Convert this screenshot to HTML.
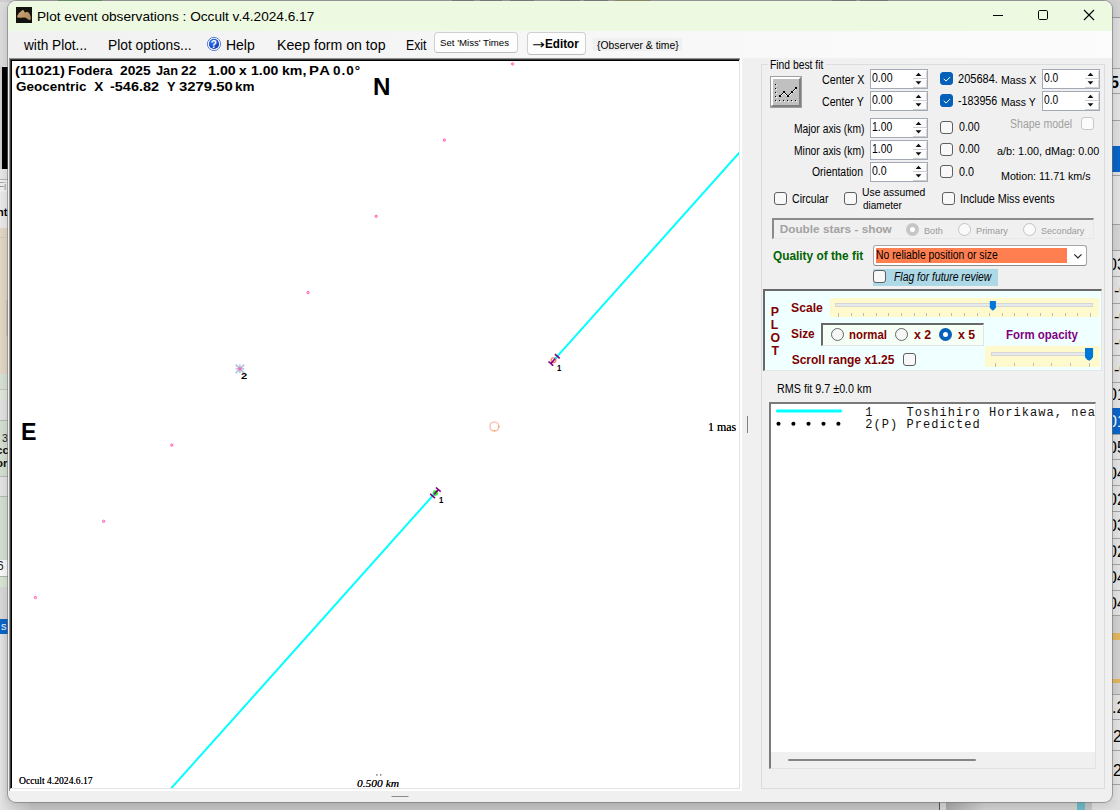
<!DOCTYPE html>
<html lang="en"><head><meta charset="utf-8"><title>Plot event observations : Occult v.4.2024.6.17</title>
<style>
html,body{margin:0;padding:0}
body{width:1120px;height:810px;overflow:hidden;position:relative;background:#c9c9c9;font-family:"Liberation Sans",sans-serif;}
.a{position:absolute;box-sizing:border-box}
.t{position:absolute;white-space:pre;line-height:1;transform-origin:0 50%;}
#win{left:8px;top:1px;width:1104px;height:801px;border-radius:8px;background:#f0f0f0;overflow:hidden;box-shadow:0 0 0 1px rgba(110,110,110,.55),0 2px 10px 2px rgba(0,0,0,.12);}
#titlebar{left:0;top:0;width:1104px;height:30px;background:#eef9e1}
#menubar{left:0;top:30px;width:1104px;height:27px;background:linear-gradient(90deg,#f1f1f1,#fcfcfc)}
.spin{background:#fff;border:1px solid #a3a9b7;height:20px}
.spbtn{background:#fcfcfc;border-right:1px solid #d9d9d9;border-bottom:1px solid #cfcfcf;width:14px}
.cb{width:13px;height:13px;border:1px solid #5f5f5f;border-radius:3px;background:#f8f8f8}
.cb.on{background:#0560b9;border-color:#0560b9}
.cb.dis{border-color:#c8c8c8;background:#fbfbfb}
.rb{width:13px;height:13px;border:1px solid #666;border-radius:50%;background:#f6f6f6}
.rb.dis{border-color:#c4c4c4;background:#fafafa}
.sunk{border-top:2px solid #6f6f6f;border-left:2px solid #6f6f6f;border-right:1px solid #e3e3e3;border-bottom:1px solid #e3e3e3}
.mono{font:12px "Liberation Mono",monospace;letter-spacing:1.045px;color:#111;white-space:pre;line-height:1}

</style></head>
<body>
<!-- desktop / background window fragments -->
<div class="a" style="left:0px;top:0px;width:9px;height:810px;background:#e6e6e6;"></div>
<div class="a" style="left:0px;top:0px;width:9px;height:66px;background:#dcdcdc;"></div>
<div class="a" style="left:0px;top:66px;width:2px;height:104px;background:#d0d0d0;"></div>
<div class="a" style="left:2px;top:67px;width:6px;height:102px;background:#000;"></div>
<div class="a" style="left:0px;top:169px;width:9px;height:10px;background:#e8e8e8;"></div>
<div class="a" style="left:0px;top:179px;width:9px;height:1px;background:#b5b5b5;"></div>
<div class="a" style="left:0px;top:180px;width:9px;height:12px;background:#f2f2f2;"></div>
<div class="a" style="left:0px;top:192px;width:9px;height:36px;background:#ebebeb;"></div>
<div class="a" style="left:0px;top:228px;width:9px;height:146px;background:#e3d7c5;"></div>
<div class="a" style="left:0px;top:237px;width:6px;height:1px;background:#d6cbbb;"></div>
<div class="a" style="left:6px;top:300px;width:2px;height:36px;background:#cfc6b8;"></div>
<div class="a" style="left:0px;top:374px;width:9px;height:15px;background:#d8e2d4;"></div>
<div class="a" style="left:0px;top:389px;width:9px;height:1px;background:#c2c8c0;"></div>
<div class="a" style="left:0px;top:390px;width:9px;height:11px;background:#e0e8dd;"></div>
<div class="a" style="left:0px;top:401px;width:9px;height:19px;background:#e2e2e2;"></div>
<div class="a" style="left:0px;top:420px;width:9px;height:1px;background:#b8b8b8;"></div>
<div class="a" style="left:0px;top:421px;width:9px;height:55px;background:#d5dfd2;"></div>
<div class="a" style="left:0px;top:476px;width:9px;height:1px;background:#b8b8b8;"></div>
<div class="a" style="left:0px;top:477px;width:9px;height:19px;background:#e4e4e4;"></div>
<div class="a" style="left:0px;top:496px;width:9px;height:1px;background:#b8b8b8;"></div>
<div class="a" style="left:0px;top:497px;width:9px;height:63px;background:#d5dfd2;"></div>
<div class="a" style="left:0px;top:560px;width:9px;height:16px;background:#fafafa;"></div>
<div class="a" style="left:0px;top:576px;width:9px;height:1px;background:#b0b0b0;"></div>
<div class="a" style="left:0px;top:577px;width:9px;height:10px;background:#d8e6d4;"></div>
<div class="a" style="left:0px;top:587px;width:9px;height:32px;background:#d8d8d8;"></div>
<div class="a" style="left:0px;top:619px;width:9px;height:15px;background:#0a66c8;"></div>
<div class="a" style="left:0px;top:634px;width:9px;height:176px;background:linear-gradient(90deg,#e6e6e6,#d6d6d6);"></div>
<div class="a" style="left:0;top:0;width:8px;height:810px;overflow:hidden;font-family:'Liberation Sans',sans-serif;white-space:pre"><span class="a" style="left:-2px;top:181px;font-size:10px;color:#999">Fi</span><span class="a" style="left:-3px;top:206px;font:bold 11px 'Liberation Sans',sans-serif;color:#000">nt</span><span class="a" style="left:2px;top:432px;font-size:10.5px;color:#222">3</span><span class="a" style="left:-4px;top:444px;font:bold 11.5px 'Liberation Sans',sans-serif;color:#111">cc</span><span class="a" style="left:-4px;top:457px;font:bold 11.5px 'Liberation Sans',sans-serif;color:#111">or</span><span class="a" style="left:-3px;top:559px;font-size:12px;color:#222">6</span><span class="a" style="left:1px;top:620px;font-size:11px;color:#fff">s</span></div>
<div class="a" style="left:0px;top:0px;width:1120px;height:2px;background:#cfcfcf;"></div>
<div class="a" style="left:58px;top:0px;width:44px;height:1px;background:#58b058;"></div>
<div class="a" style="left:615px;top:0px;width:36px;height:1px;background:#b0ae62;"></div>
<div class="a" style="left:452px;top:0px;width:22px;height:1px;background:#8c8c96;"></div>
<div class="a" style="left:480px;top:0px;width:22px;height:1px;background:#8c8c96;"></div>
<div class="a" style="left:510px;top:0px;width:24px;height:1px;background:#8c8c96;"></div>
<div class="a" style="left:560px;top:0px;width:20px;height:1px;background:#8c8c96;"></div>
<div class="a" style="left:584px;top:0px;width:24px;height:1px;background:#8c8c96;"></div>
<div class="a" style="left:832px;top:0px;width:24px;height:1px;background:#8c8c96;"></div>
<div class="a" style="left:860px;top:0px;width:28px;height:1px;background:#8c8c96;"></div>
<div class="a" style="left:1108px;top:0px;width:12px;height:810px;background:#e4e4e4;"></div>
<div class="a" style="left:1108px;top:0px;width:12px;height:17px;background:#d2d2d2;"></div>
<div class="a" style="left:1108px;top:17px;width:12px;height:1px;background:#9c9c9c;"></div>
<div class="a" style="left:1108px;top:18px;width:12px;height:50px;background:#dedede;"></div>
<div class="a" style="left:1108px;top:68px;width:12px;height:1px;background:#a4a4a4;"></div>
<div class="a" style="left:1108px;top:93px;width:12px;height:1px;background:#a4a4a4;"></div>
<div class="a" style="left:1108px;top:120px;width:12px;height:1px;background:#a4a4a4;"></div>
<div class="a" style="left:1108px;top:175px;width:12px;height:1px;background:#a4a4a4;"></div>
<div class="a" style="left:1108px;top:224px;width:12px;height:1px;background:#a4a4a4;"></div>
<div class="a" style="left:1108px;top:250px;width:12px;height:1px;background:#a4a4a4;"></div>
<div class="a" style="left:1108px;top:276px;width:12px;height:1px;background:#a4a4a4;"></div>
<div class="a" style="left:1108px;top:303px;width:12px;height:1px;background:#a4a4a4;"></div>
<div class="a" style="left:1108px;top:329px;width:12px;height:1px;background:#a4a4a4;"></div>
<div class="a" style="left:1108px;top:355px;width:12px;height:1px;background:#a4a4a4;"></div>
<div class="a" style="left:1108px;top:382px;width:12px;height:1px;background:#a4a4a4;"></div>
<div class="a" style="left:1108px;top:408px;width:12px;height:1px;background:#a4a4a4;"></div>
<div class="a" style="left:1108px;top:434px;width:12px;height:1px;background:#a4a4a4;"></div>
<div class="a" style="left:1108px;top:459px;width:12px;height:1px;background:#a4a4a4;"></div>
<div class="a" style="left:1108px;top:485px;width:12px;height:1px;background:#a4a4a4;"></div>
<div class="a" style="left:1108px;top:511px;width:12px;height:1px;background:#a4a4a4;"></div>
<div class="a" style="left:1108px;top:538px;width:12px;height:1px;background:#a4a4a4;"></div>
<div class="a" style="left:1108px;top:564px;width:12px;height:1px;background:#a4a4a4;"></div>
<div class="a" style="left:1108px;top:590px;width:12px;height:1px;background:#a4a4a4;"></div>
<div class="a" style="left:1108px;top:615px;width:12px;height:1px;background:#a4a4a4;"></div>
<div class="a" style="left:1108px;top:694px;width:12px;height:1px;background:#a4a4a4;"></div>
<div class="a" style="left:1108px;top:719px;width:12px;height:1px;background:#a4a4a4;"></div>
<div class="a" style="left:1108px;top:750px;width:12px;height:1px;background:#a4a4a4;"></div>
<div class="a" style="left:1108px;top:784px;width:12px;height:1px;background:#a4a4a4;"></div>
<div class="a" style="left:1108px;top:121px;width:12px;height:25px;background:#e0e0e0;"></div>
<div class="a" style="left:1108px;top:146px;width:12px;height:26px;background:#0a64c8;"></div>
<div class="a" style="left:1108px;top:225px;width:12px;height:25px;background:#d6d6d6;"></div>
<div class="a" style="left:1108px;top:408px;width:12px;height:26px;background:#0a64c8;"></div>
<div class="a" style="left:1108px;top:616px;width:12px;height:78px;background:#d2d2d2;"></div>
<div class="a" style="left:1108px;top:633px;width:12px;height:7px;background:#e2b85e;"></div>
<div class="a" style="left:1108px;top:679px;width:12px;height:4px;background:#e2b85e;"></div>
<div class="a" style="left:1113px;top:0;width:7px;height:810px;overflow:hidden;white-space:pre;font:16px 'Liberation Sans',sans-serif;line-height:1"><span class="a" style="left:-3px;top:74.5px;color:#000;font-weight:bold;">5</span><span class="a" style="left:-5px;top:256.5px;color:#000;">03</span><span class="a" style="left:1px;top:282.5px;color:#000;">-0</span><span class="a" style="left:1px;top:308.5px;color:#000;">-0</span><span class="a" style="left:1px;top:334.5px;color:#000;">-0</span><span class="a" style="left:1px;top:361.5px;color:#000;">-0</span><span class="a" style="left:-5px;top:386.5px;color:#000;">01</span><span class="a" style="left:-5px;top:413.5px;color:#fff;">01</span><span class="a" style="left:-5px;top:439.5px;color:#000;">05</span><span class="a" style="left:-5px;top:465.5px;color:#000;">04</span><span class="a" style="left:-5px;top:491.5px;color:#000;">02</span><span class="a" style="left:-5px;top:517.5px;color:#000;">03</span><span class="a" style="left:-5px;top:543.5px;color:#000;">02</span><span class="a" style="left:-5px;top:569.5px;color:#000;">04</span><span class="a" style="left:-5px;top:595.5px;color:#000;">04</span><span class="a" style="left:-1px;top:699.5px;color:#000;">.2</span><span class="a" style="left:0px;top:728.5px;color:#000;">25</span><span class="a" style="left:0px;top:762.5px;color:#000;">25</span></div>
<div class="a" style="left:0px;top:800px;width:1120px;height:10px;background:#c4c4c4;"></div>
<div class="a" style="left:0px;top:800px;width:30px;height:10px;background:linear-gradient(90deg,#e2e2e2,#c8c8c8);"></div>
<div class="a" style="left:939px;top:800px;width:1px;height:10px;background:#555;"></div>
<div class="a" style="left:940px;top:800px;width:6px;height:10px;background:#d4d4d4;"></div>
<div class="a" style="left:946px;top:800px;width:131px;height:10px;background:linear-gradient(90deg,#a8a8a8,#d0d0d0 30%);"></div>
<div class="a" style="left:1077px;top:800px;width:8px;height:10px;background:#6bbac6;"></div>
<div class="a" style="left:1092px;top:800px;width:28px;height:10px;background:#e0e0e0;"></div>

<!-- main window -->
<div class="a" id="win">
  <div class="a" id="titlebar"></div>
  <div class="a" id="menubar"></div>
</div>

<!-- title bar icon -->
<div class="a" style="left:16px;top:7px;width:16px;height:16px;background:#13120d;overflow:hidden">
  <svg width="16" height="16" viewBox="0 0 16 16"><defs><linearGradient id="ag" x1="0" y1="0" x2="1" y2="1"><stop offset="0" stop-color="#cfa978"/><stop offset="1" stop-color="#a8845a"/></linearGradient></defs><path d="M1.2 9.6 C1.6 7 4.6 4.2 6.8 3 C7.6 2.8 8.2 4.2 8.8 5.6 C9.6 5.2 10.6 4.8 11.6 5 C13.4 5.6 14.6 8.4 14.8 11 C14.8 12.6 14 13.4 13 13 C11.6 12.2 10.4 11 9 10.6 C7.4 10.4 5 10.8 3 10.8 C1.8 10.8 1 10.4 1.2 9.6 Z" fill="url(#ag)"/></svg>
</div>

<!-- menu buttons -->
<div class="a" style="left:434px;top:32px;width:84px;height:21px;background:#fdfdfd;border:1px solid #d0d0d0;border-bottom-color:#bdbdbd;border-radius:4px"></div>
<div class="a" style="left:527px;top:32px;width:59px;height:23px;background:#fdfdfd;border:1px solid #d0d0d0;border-bottom-color:#bdbdbd;border-radius:4px"></div>
<div class="a" style="left:593px;top:38px;width:89px;height:13px;background:#f0f0f0"></div>

<!-- plot picture box -->
<div class="a" style="left:9px;top:58px;width:733px;height:733px;background:#fff;border-top:1px solid #909090;border-left:1px solid #909090"></div>
<div class="a" style="left:740px;top:58px;width:2px;height:1px;background:#fff"></div>
<div class="a" style="left:10px;top:59px;width:730px;height:730px;background:#fff;border-top:1px solid #3a3a3a;border-left:1px solid #3a3a3a;border-right:1px solid #e3e3e3;border-bottom:1px solid #e3e3e3"></div>
<div class="a" style="left:11px;top:60px;width:728px;height:728px;background:#fff;border-top:1px solid #000;border-left:1px solid #000"></div>

<!-- group box -->
<div class="a" style="left:761px;top:64px;width:344px;height:725px;border:1px solid #dcdcdc"></div>
<div class="a" style="left:768px;top:60px;width:58px;height:10px;background:#f0f0f0"></div>

<!-- fit button -->
<div class="a" style="left:770px;top:76px;width:32px;height:32px;background:#c0c0c0;border:1px solid #a0a0a0"></div>

<!-- spinners -->
<div class="a spin" style="left:870px;top:69px;width:58px"><div class="a spbtn" style="left:42px;top:1px;height:8px"></div><div class="a spbtn" style="left:42px;top:10px;height:8px"></div></div>
<div class="a spin" style="left:870px;top:91px;width:58px"><div class="a spbtn" style="left:42px;top:1px;height:8px"></div><div class="a spbtn" style="left:42px;top:10px;height:8px"></div></div>
<div class="a spin" style="left:870px;top:118px;width:58px"><div class="a spbtn" style="left:42px;top:1px;height:8px"></div><div class="a spbtn" style="left:42px;top:10px;height:8px"></div></div>
<div class="a spin" style="left:870px;top:140px;width:58px"><div class="a spbtn" style="left:42px;top:1px;height:8px"></div><div class="a spbtn" style="left:42px;top:10px;height:8px"></div></div>
<div class="a spin" style="left:870px;top:162px;width:58px"><div class="a spbtn" style="left:42px;top:1px;height:8px"></div><div class="a spbtn" style="left:42px;top:10px;height:8px"></div></div>
<div class="a spin" style="left:1042px;top:69px;width:58px"><div class="a spbtn" style="left:42px;top:1px;height:8px"></div><div class="a spbtn" style="left:42px;top:10px;height:8px"></div></div>
<div class="a spin" style="left:1042px;top:91px;width:58px"><div class="a spbtn" style="left:42px;top:1px;height:8px"></div><div class="a spbtn" style="left:42px;top:10px;height:8px"></div></div>

<!-- checkboxes -->
<div class="a cb on" style="left:940px;top:72px"></div>
<div class="a cb on" style="left:940px;top:94px"></div>
<div class="a cb" style="left:940px;top:121px"></div>
<div class="a cb" style="left:940px;top:143px"></div>
<div class="a cb" style="left:940px;top:165px"></div>
<div class="a cb dis" style="left:1081px;top:117px"></div>
<div class="a cb" style="left:774px;top:192px"></div>
<div class="a cb" style="left:844px;top:192px"></div>
<div class="a cb" style="left:942px;top:192px"></div>

<!-- double stars panel -->
<div class="a sunk" style="left:772px;top:218px;width:322px;height:21px;border-color:#8a8a8a #e8e8e8 #e8e8e8 #8a8a8a"></div>
<div class="a rb dis" style="left:906px;top:223px;border:4px solid #c6c6c6;background:#fff"></div>
<div class="a rb dis" style="left:958px;top:223px"></div>
<div class="a rb dis" style="left:1023px;top:223px"></div>

<!-- quality combo -->
<div class="a" style="left:873px;top:245px;width:214px;height:21px;background:#fff;border:1px solid #a6a6a6;border-bottom-color:#8c8c8c;border-radius:3px"></div>
<div class="a" style="left:876px;top:248px;width:191px;height:15px;background:#ff7f50"></div>
<div class="a" style="left:873px;top:269px;width:125px;height:17px;background:#add8e6"></div>
<div class="a cb" style="left:873px;top:270px"></div>

<!-- PLOT panel -->
<div class="a sunk" style="left:763px;top:289px;width:339px;height:82px;background:#f0ffff;border-color:#696969 #e6e6e6 #e6e6e6 #696969"></div>
<div class="a" style="left:830px;top:298px;width:269px;height:19px;background:#fffacd"></div>
<div class="a" style="left:835px;top:303px;width:258px;height:4px;background:#e7eaea;border:1px solid #d6d6d6"></div>
<div class="a sunk" style="left:821px;top:323px;width:163px;height:23px;background:#f5fff5;border-color:#696969 #e3e3e3 #e3e3e3 #696969"></div>
<div class="a rb" style="left:831px;top:328px"></div>
<div class="a rb" style="left:895px;top:328px"></div>
<div class="a rb" style="left:939px;top:328px;border:4px solid #0560b9;background:#fff"></div>
<div class="a" style="left:985px;top:346px;width:115px;height:21px;background:#fffacd"></div>
<div class="a" style="left:991px;top:352px;width:102px;height:4px;background:#e7eaea;border:1px solid #d6d6d6"></div>
<div class="a cb" style="left:903px;top:353px"></div>

<!-- list box -->
<div class="a" style="left:769px;top:402px;width:327px;height:367px;background:#fff;border-top:2px solid #7a7a7a;border-left:2px solid #7a7a7a;border-right:1px solid #e3e3e3;border-bottom:1px solid #e3e3e3;overflow:hidden">
  <div class="a" style="left:0;top:348px;width:325px;height:17px;background:#f0f0f0"></div>
  <div class="a" style="left:17px;top:355px;width:188px;height:2px;background:#858585;border-radius:1px"></div>
  <span class="a mono" style="left:94.2px;top:3px">1    Toshihiro Horikawa, nea</span>
  <span class="a mono" style="left:94.2px;top:14.7px">2(P) Predicted</span>
</div>

<!-- vector overlay -->
<svg class="a" style="left:0;top:0" width="1120" height="810" viewBox="0 0 1120 810">
<defs><clipPath id="pc"><rect x="12" y="61" width="727" height="727"/></clipPath></defs>
<g clip-path="url(#pc)">
<circle cx="553.5" cy="360.2" r="2.4" fill="none" stroke="#ff8060" stroke-width="1.3"/>
<circle cx="435.4" cy="493" r="2.4" fill="#30f030" stroke="#30f030" stroke-width="1"/>
<line x1="550.8" y1="363.6" x2="557.3" y2="356.3" stroke="#800080" stroke-width="1.6"/>
<line x1="432.6" y1="496.0" x2="438.3" y2="489.6" stroke="#800080" stroke-width="1.6"/>
<line x1="555.2" y1="358.7" x2="821.7" y2="60.4" stroke="#00ffff" stroke-width="1.95"/>
<line x1="434.0" y1="494.3" x2="100.8" y2="867.1" stroke="#00ffff" stroke-width="1.95"/>
<line x1="548.4" y1="361.5" x2="553.2" y2="365.7" stroke="#800080" stroke-width="1.6"/>
<line x1="554.9" y1="354.2" x2="559.7" y2="358.4" stroke="#800080" stroke-width="1.6"/>
<line x1="430.2" y1="493.9" x2="435.0" y2="498.1" stroke="#800080" stroke-width="1.6"/>
<line x1="435.9" y1="487.5" x2="440.7" y2="491.7" stroke="#800080" stroke-width="1.6"/>
<circle cx="512.6" cy="63.9" r="1.15" fill="#ff69b4" fill-opacity=".35" stroke="#ff5cae" stroke-width="1"/>
<circle cx="444.4" cy="140.1" r="1.15" fill="#ff69b4" fill-opacity=".35" stroke="#ff5cae" stroke-width="1"/>
<circle cx="376.2" cy="216.3" r="1.15" fill="#ff69b4" fill-opacity=".35" stroke="#ff5cae" stroke-width="1"/>
<circle cx="308.1" cy="292.6" r="1.15" fill="#ff69b4" fill-opacity=".35" stroke="#ff5cae" stroke-width="1"/>
<line x1="235.6" y1="368.8" x2="244.2" y2="368.8" stroke="#b0c4de" stroke-width="1.5"/>
<line x1="235.7" y1="364.6" x2="244.2" y2="373.1" stroke="#b0c4de" stroke-width="1.7"/>
<line x1="239.9" y1="364.5" x2="239.9" y2="373.1" stroke="#b0c4de" stroke-width="1.5"/>
<line x1="244.2" y1="364.6" x2="235.7" y2="373.1" stroke="#b0c4de" stroke-width="1.7"/>
<circle cx="239.9" cy="368.8" r="1.7" fill="#ff69b4"/>
<circle cx="171.8" cy="445.1" r="1.15" fill="#ff69b4" fill-opacity=".35" stroke="#ff5cae" stroke-width="1"/>
<circle cx="103.6" cy="521.3" r="1.15" fill="#ff69b4" fill-opacity=".35" stroke="#ff5cae" stroke-width="1"/>
<circle cx="35.4" cy="597.5" r="1.15" fill="#ff69b4" fill-opacity=".35" stroke="#ff5cae" stroke-width="1"/>
<circle cx="494.4" cy="426.5" r="4.5" fill="none" stroke="#f8c4bc" stroke-width="1.6"/>
<rect x="498" y="425.9" width="1.2" height="1.2" fill="#ff9800"/><rect x="493.8" y="430" width="1.2" height="1.2" fill="#ff9800"/>
<rect x="376.4" y="774.4" width="1.1" height="1.1" fill="#111"/><rect x="380.2" y="774.4" width="1.1" height="1.1" fill="#111"/>
</g>
<rect x="747" y="416" width="1" height="17" fill="#808080"/>
<rect x="391.5" y="796" width="17" height="1" fill="#8a8a8a"/>
<path d="M993 15.5H1003" stroke="#000" stroke-width="1" fill="none"/>
<rect x="1038.5" y="10.5" width="9" height="9" rx="1.2" fill="none" stroke="#000" stroke-width="1"/>
<path d="M1084 10L1094 20M1094 10L1084 20" stroke="#000" stroke-width="1.1" fill="none"/>
<defs><radialGradient id="hg" cx=".4" cy=".3" r=".8"><stop offset="0" stop-color="#3f7cf0"/><stop offset=".6" stop-color="#1a50d0"/><stop offset="1" stop-color="#0a2f9a"/></radialGradient></defs>
<circle cx="214" cy="43.95" r="6.6" fill="#fff" stroke="#4a6cd0" stroke-width="0.9"/>
<circle cx="214" cy="43.95" r="5.1" fill="url(#hg)"/>
<path d="M771 77H801V79H773V105H771Z" fill="#fff"/>
<path d="M801 77V107H771L773 105H799V79Z" fill="#808080"/>
<rect x="775" y="84" width="1" height="1" fill="#000"/><rect x="776" y="85" width="1" height="1" fill="#fff"/>
<rect x="775" y="88" width="1" height="1" fill="#000"/><rect x="776" y="89" width="1" height="1" fill="#fff"/>
<rect x="775" y="92" width="1" height="1" fill="#000"/><rect x="776" y="93" width="1" height="1" fill="#fff"/>
<rect x="775" y="96" width="1" height="1" fill="#000"/><rect x="776" y="97" width="1" height="1" fill="#fff"/>
<rect x="775" y="100" width="1" height="1" fill="#000"/><rect x="776" y="101" width="1" height="1" fill="#fff"/>
<rect x="779" y="100" width="1" height="1" fill="#000"/><rect x="780" y="101" width="1" height="1" fill="#fff"/>
<rect x="783" y="100" width="1" height="1" fill="#000"/><rect x="784" y="101" width="1" height="1" fill="#fff"/>
<rect x="787" y="100" width="1" height="1" fill="#000"/><rect x="788" y="101" width="1" height="1" fill="#fff"/>
<rect x="791" y="100" width="1" height="1" fill="#000"/><rect x="792" y="101" width="1" height="1" fill="#fff"/>
<rect x="795" y="100" width="1" height="1" fill="#000"/><rect x="796" y="101" width="1" height="1" fill="#fff"/>
<path d="M780 97L784 93L788 97L792 93L796 89" stroke="#fff" stroke-width="1" fill="none"/>
<path d="M780 96L784 92L788 96L792 92L796 88" stroke="#000" stroke-width="1" fill="none"/>
<rect x="779" y="95" width="2" height="2" fill="#000"/>
<rect x="783" y="91" width="2" height="2" fill="#000"/>
<rect x="787" y="95" width="2" height="2" fill="#000"/>
<rect x="791" y="91" width="2" height="2" fill="#000"/>
<rect x="795" y="87" width="2" height="2" fill="#000"/>
<path d="M915.6 76L918.5 72.7L921.4 76Z" fill="#111"/>
<path d="M915.6 81.2L918.5 84.5L921.4 81.2Z" fill="#111"/>
<path d="M915.6 98L918.5 94.7L921.4 98Z" fill="#111"/>
<path d="M915.6 103.2L918.5 106.5L921.4 103.2Z" fill="#111"/>
<path d="M915.6 125L918.5 121.7L921.4 125Z" fill="#111"/>
<path d="M915.6 130.2L918.5 133.5L921.4 130.2Z" fill="#111"/>
<path d="M915.6 147L918.5 143.7L921.4 147Z" fill="#111"/>
<path d="M915.6 152.2L918.5 155.5L921.4 152.2Z" fill="#111"/>
<path d="M915.6 169L918.5 165.7L921.4 169Z" fill="#111"/>
<path d="M915.6 174.2L918.5 177.5L921.4 174.2Z" fill="#111"/>
<path d="M1087.6 76L1090.5 72.7L1093.4 76Z" fill="#111"/>
<path d="M1087.6 81.2L1090.5 84.5L1093.4 81.2Z" fill="#111"/>
<path d="M1087.6 98L1090.5 94.7L1093.4 98Z" fill="#111"/>
<path d="M1087.6 103.2L1090.5 106.5L1093.4 103.2Z" fill="#111"/>
<path d="M944 79.1L946.1 81.1L949.7 77.4" stroke="#fff" stroke-width="1" fill="none" stroke-linecap="round" stroke-linejoin="round"/>
<path d="M944 101.1L946.1 103.1L949.7 99.4" stroke="#fff" stroke-width="1" fill="none" stroke-linecap="round" stroke-linejoin="round"/>
<path d="M1074.3 254.3L1077.9 257.9L1081.5 254.3" stroke="#222" stroke-width="1.1" fill="none"/>
<rect x="838" y="313" width="1" height="4" fill="#bcbcb8"/>
<rect x="851" y="313" width="1" height="3" fill="#bcbcb8"/>
<rect x="863" y="313" width="1" height="3" fill="#bcbcb8"/>
<rect x="876" y="313" width="1" height="3" fill="#bcbcb8"/>
<rect x="888" y="313" width="1" height="3" fill="#bcbcb8"/>
<rect x="901" y="313" width="1" height="3" fill="#bcbcb8"/>
<rect x="914" y="313" width="1" height="3" fill="#bcbcb8"/>
<rect x="926" y="313" width="1" height="3" fill="#bcbcb8"/>
<rect x="939" y="313" width="1" height="3" fill="#bcbcb8"/>
<rect x="951" y="313" width="1" height="3" fill="#bcbcb8"/>
<rect x="964" y="313" width="1" height="3" fill="#bcbcb8"/>
<rect x="977" y="313" width="1" height="3" fill="#bcbcb8"/>
<rect x="989" y="313" width="1" height="3" fill="#bcbcb8"/>
<rect x="1002" y="313" width="1" height="3" fill="#bcbcb8"/>
<rect x="1014" y="313" width="1" height="3" fill="#bcbcb8"/>
<rect x="1027" y="313" width="1" height="3" fill="#bcbcb8"/>
<rect x="1040" y="313" width="1" height="3" fill="#bcbcb8"/>
<rect x="1052" y="313" width="1" height="3" fill="#bcbcb8"/>
<rect x="1065" y="313" width="1" height="3" fill="#bcbcb8"/>
<rect x="1077" y="313" width="1" height="3" fill="#bcbcb8"/>
<rect x="1090" y="313" width="1" height="4" fill="#bcbcb8"/>
<rect x="995" y="363" width="1" height="4" fill="#bcbcb8"/>
<rect x="1014" y="363" width="1" height="3" fill="#bcbcb8"/>
<rect x="1033" y="363" width="1" height="3" fill="#bcbcb8"/>
<rect x="1051" y="363" width="1" height="3" fill="#bcbcb8"/>
<rect x="1070" y="363" width="1" height="3" fill="#bcbcb8"/>
<rect x="1089" y="363" width="1" height="4" fill="#bcbcb8"/>
<path d="M989.8 300.9H995.9V307.3Q995.9 308.6 992.85 310.8Q989.8 308.6 989.8 307.3Z" fill="#0078d7"/>
<path d="M1085 348.1H1093.1V356.4Q1093.1 358.4 1089.05 360.7Q1085 358.4 1085 356.4Z" fill="#0078d7"/>
<path d="M777.4 411H840.6" stroke="#00ffff" stroke-width="2.9" stroke-linecap="round"/>
<circle cx="778.5" cy="423.7" r="2.05" fill="#000"/>
<circle cx="793.4" cy="423.7" r="2.05" fill="#000"/>
<circle cx="808.5" cy="423.7" r="2.05" fill="#000"/>
<circle cx="823.5" cy="423.7" r="2.05" fill="#000"/>
<circle cx="838.4" cy="423.7" r="2.05" fill="#000"/>
</svg>

<span class="t" style='left:36.78px;top:8.80px;font:normal 13.4px "Liberation Sans", sans-serif;color:#000;transform:scaleX(1.0185);'>Plot event observations : Occult v.4.2024.6.17</span>
<span class="t" style='left:24.30px;top:37.00px;font:normal 14px "Liberation Sans", sans-serif;color:#000;transform:scaleX(0.9750);'>with Plot...</span>
<span class="t" style='left:107.61px;top:37.00px;font:normal 14px "Liberation Sans", sans-serif;color:#000;transform:scaleX(0.9855);'>Plot options...</span>
<span class="t" style='left:225.90px;top:37.00px;font:normal 14px "Liberation Sans", sans-serif;color:#000;'>Help</span>
<span class="t" style='left:276.59px;top:37.00px;font:normal 14px "Liberation Sans", sans-serif;color:#000;transform:scaleX(1.0104);'>Keep form on top</span>
<span class="t" style='left:405.92px;top:37.00px;font:normal 14px "Liberation Sans", sans-serif;color:#000;transform:scaleX(0.8773);'>Exit</span>
<span class="t" style='left:440.07px;top:36.90px;font:normal 9.4px "Liberation Sans", sans-serif;color:#000;transform:scaleX(1.0273);'>Set 'Miss' Times</span>
<span class="t" style='left:532.13px;top:36.60px;font:normal 13px "DejaVu Sans", "Liberation Sans", sans-serif;color:#000;transform:scaleX(1.1700);'>→</span>
<span class="t" style='left:545.24px;top:36.70px;font:bold 12.2px "Liberation Sans", sans-serif;color:#000;transform:scaleX(0.9588);'>Editor</span>
<span class="t" style='left:210.70px;top:38.80px;font:bold 10px "Liberation Sans", sans-serif;color:#fff;'>?</span>
<span class="t" style='left:596.60px;top:37.60px;font:normal 11.6px "Liberation Sans", sans-serif;color:#000;transform:scaleX(0.8923);'>{Observer &amp; time}</span>
<span class="t" style='left:14.82px;top:63.00px;font:bold 13.6px "Liberation Sans", sans-serif;color:#000;transform:scaleX(1.0822);'>(11021)</span>
<span class="t" style='left:67.52px;top:63.00px;font:bold 13.6px "Liberation Sans", sans-serif;color:#000;transform:scaleX(0.9800);'>Fodera</span>
<span class="t" style='left:120.30px;top:63.00px;font:bold 13.6px "Liberation Sans", sans-serif;color:#000;transform:scaleX(1.0167);'>2025</span>
<span class="t" style='left:155.50px;top:63.00px;font:bold 13.6px "Liberation Sans", sans-serif;color:#000;transform:scaleX(0.9391);'>Jan</span>
<span class="t" style='left:181.30px;top:63.00px;font:bold 13.6px "Liberation Sans", sans-serif;color:#000;transform:scaleX(1.0200);'>22</span>
<span class="t" style='left:207.70px;top:63.00px;font:bold 13.6px "Liberation Sans", sans-serif;color:#000;transform:scaleX(1.0500);'>1.00</span>
<span class="t" style='left:239.10px;top:63.00px;font:bold 13.6px "Liberation Sans", sans-serif;color:#000;transform:scaleX(1.0214);'>x</span>
<span class="t" style='left:251.22px;top:63.00px;font:bold 13.6px "Liberation Sans", sans-serif;color:#000;transform:scaleX(1.0340);'>1.00</span>
<span class="t" style='left:281.76px;top:63.00px;font:bold 13.6px "Liberation Sans", sans-serif;color:#000;transform:scaleX(1.0409);'>km,</span>
<span class="t" style='left:308.91px;top:63.00px;font:bold 13.6px "Liberation Sans", sans-serif;color:#000;transform:scaleX(1.0944);letter-spacing:1.3px;'>PA</span>
<span class="t" style='left:333.40px;top:63.00px;font:bold 13.6px "Liberation Sans", sans-serif;color:#000;transform:scaleX(0.9944);letter-spacing:1px;'>0.0°</span>
<span class="t" style='left:15.90px;top:78.60px;font:bold 13.6px "Liberation Sans", sans-serif;color:#000;transform:scaleX(0.9915);'>Geocentric</span>
<span class="t" style='left:94.30px;top:78.60px;font:bold 13.6px "Liberation Sans", sans-serif;color:#000;'>X</span>
<span class="t" style='left:110.40px;top:78.60px;font:bold 13.6px "Liberation Sans", sans-serif;color:#000;transform:scaleX(1.0630);'>-546.82</span>
<span class="t" style='left:166.90px;top:78.60px;font:bold 13.6px "Liberation Sans", sans-serif;color:#000;transform:scaleX(0.9444);'>Y</span>
<span class="t" style='left:178.50px;top:78.60px;font:bold 13.6px "Liberation Sans", sans-serif;color:#000;transform:scaleX(1.0958);'>3279.50</span>
<span class="t" style='left:234.91px;top:78.60px;font:bold 13.6px "Liberation Sans", sans-serif;color:#000;transform:scaleX(0.9917);'>km</span>
<span class="t" style='left:372.75px;top:73.60px;font:bold 23px "Liberation Sans", sans-serif;color:#000;transform:scaleX(1.0500);'>N</span>
<span class="t" style='left:20.91px;top:419.00px;font:bold 23.4px "Liberation Sans", sans-serif;color:#000;transform:scaleX(0.9929);'>E</span>
<span class="t" style='left:556.60px;top:363.10px;font:bold 8.8px "Liberation Sans", sans-serif;color:#000;transform:scaleX(0.8800);'>1</span>
<span class="t" style='left:438.60px;top:495.10px;font:bold 8.8px "Liberation Sans", sans-serif;color:#000;transform:scaleX(0.8800);'>1</span>
<span class="t" style='left:241.30px;top:370.00px;font:bold 9.6px "Liberation Sans", sans-serif;color:#000;transform:scaleX(1.1600);'>2</span>
<span class="t" style='left:708.32px;top:420.80px;font:normal 11.5px "Liberation Serif", serif;color:#000;transform:scaleX(1.0400);text-shadow:0 0 .5px rgba(0,0,0,.8);'>1 mas</span>
<span class="t" style='left:19.10px;top:774.60px;font:normal 9.6px "Liberation Serif", serif;color:#000;text-shadow:0 0 .5px rgba(0,0,0,.8);'>Occult 4.2024.6.17</span>
<span class="t" style='left:357.30px;top:778.00px;font:italic normal 10.6px "Liberation Serif", serif;color:#000;transform:scaleX(1.0821);text-shadow:0 0 .5px rgba(0,0,0,.8);'>0.500 km</span>
<span class="t" style='left:769.77px;top:57.70px;font:normal 12.5px "Liberation Sans", sans-serif;color:#000;transform:scaleX(0.8250);'>Find best fit</span>
<span class="t" style='left:821.74px;top:72.90px;font:normal 12.5px "Liberation Sans", sans-serif;color:#000;transform:scaleX(0.8604);'>Center X</span>
<span class="t" style='left:821.75px;top:94.90px;font:normal 12.5px "Liberation Sans", sans-serif;color:#000;transform:scaleX(0.8500);'>Center Y</span>
<span class="t" style='left:793.88px;top:122.00px;font:normal 12.5px "Liberation Sans", sans-serif;color:#000;transform:scaleX(0.8250);'>Major axis (km)</span>
<span class="t" style='left:793.88px;top:143.80px;font:normal 12.5px "Liberation Sans", sans-serif;color:#000;transform:scaleX(0.8250);'>Minor axis (km)</span>
<span class="t" style='left:811.97px;top:164.60px;font:normal 12.5px "Liberation Sans", sans-serif;color:#000;transform:scaleX(0.8333);'>Orientation</span>
<span class="t" style='left:872.20px;top:69.80px;font:normal 12.8px "Liberation Sans", sans-serif;color:#000;transform:scaleX(0.8240);'>0.00</span>
<span class="t" style='left:872.20px;top:91.80px;font:normal 12.8px "Liberation Sans", sans-serif;color:#000;transform:scaleX(0.8240);'>0.00</span>
<span class="t" style='left:872.49px;top:118.80px;font:normal 12.8px "Liberation Sans", sans-serif;color:#000;transform:scaleX(0.8125);'>1.00</span>
<span class="t" style='left:872.49px;top:140.80px;font:normal 12.8px "Liberation Sans", sans-serif;color:#000;transform:scaleX(0.8125);'>1.00</span>
<span class="t" style='left:872.20px;top:162.80px;font:normal 12.8px "Liberation Sans", sans-serif;color:#000;transform:scaleX(0.8222);'>0.0</span>
<span class="t" style='left:1044.20px;top:69.80px;font:normal 12.8px "Liberation Sans", sans-serif;color:#000;transform:scaleX(0.8000);'>0.0</span>
<span class="t" style='left:1044.20px;top:91.80px;font:normal 12.8px "Liberation Sans", sans-serif;color:#000;transform:scaleX(0.8000);'>0.0</span>
<span class="t" style='left:958.12px;top:72.10px;font:normal 12.5px "Liberation Sans", sans-serif;color:#000;transform:scaleX(0.8837);'>205684.</span>
<span class="t" style='left:958.14px;top:93.90px;font:normal 12.5px "Liberation Sans", sans-serif;color:#000;transform:scaleX(0.8556);'>-183956</span>
<span class="t" style='left:1000.56px;top:75.00px;font:normal 10.2px "Liberation Sans", sans-serif;color:#000;transform:scaleX(1.0424);'>Mass X</span>
<span class="t" style='left:1000.58px;top:96.80px;font:normal 10.2px "Liberation Sans", sans-serif;color:#000;transform:scaleX(1.0242);'>Mass Y</span>
<span class="t" style='left:959.00px;top:120.40px;font:normal 12.5px "Liberation Sans", sans-serif;color:#000;transform:scaleX(0.8500);'>0.00</span>
<span class="t" style='left:959.00px;top:142.40px;font:normal 12.5px "Liberation Sans", sans-serif;color:#000;transform:scaleX(0.8500);'>0.00</span>
<span class="t" style='left:959.00px;top:164.50px;font:normal 12.5px "Liberation Sans", sans-serif;color:#000;transform:scaleX(0.8647);'>0.0</span>
<span class="t" style='left:1010.46px;top:116.60px;font:normal 12.5px "Liberation Sans", sans-serif;color:#a0a0a0;transform:scaleX(0.8431);'>Shape model</span>
<span class="t" style='left:996.80px;top:145.70px;font:normal 10.2px "Liberation Sans", sans-serif;color:#000;transform:scaleX(1.0615);'>a/b: 1.00, dMag: 0.00</span>
<span class="t" style='left:1000.55px;top:170.60px;font:normal 10.2px "Liberation Sans", sans-serif;color:#000;transform:scaleX(1.0500);'>Motion: 11.71 km/s</span>
<span class="t" style='left:791.85px;top:192.00px;font:normal 12.5px "Liberation Sans", sans-serif;color:#000;transform:scaleX(0.8452);'>Circular</span>
<span class="t" style='left:862.38px;top:187.00px;font:normal 10.2px "Liberation Sans", sans-serif;color:#000;transform:scaleX(1.0164);'>Use assumed</span>
<span class="t" style='left:863.40px;top:200.00px;font:normal 10.2px "Liberation Sans", sans-serif;color:#000;transform:scaleX(0.9800);'>diameter</span>
<span class="t" style='left:960.14px;top:192.00px;font:normal 12.5px "Liberation Sans", sans-serif;color:#000;transform:scaleX(0.8611);'>Include Miss events</span>
<span class="t" style='left:779.70px;top:222.00px;font:bold 11.8px "Liberation Sans", sans-serif;color:#a2a2a2;'>Double stars - show</span>
<span class="t" style='left:923.76px;top:225.10px;font:normal 9.8px "Liberation Sans", sans-serif;color:#9a9a9a;transform:scaleX(0.9368);'>Both</span>
<span class="t" style='left:975.65px;top:225.10px;font:normal 9.8px "Liberation Sans", sans-serif;color:#9a9a9a;transform:scaleX(0.9455);'>Primary</span>
<span class="t" style='left:1040.98px;top:225.10px;font:normal 9.8px "Liberation Sans", sans-serif;color:#9a9a9a;transform:scaleX(0.9239);'>Secondary</span>
<span class="t" style='left:773.00px;top:248.60px;font:bold 12px "Liberation Sans", sans-serif;color:#006400;transform:scaleX(0.9868);'>Quality of the fit</span>
<span class="t" style='left:875.77px;top:247.80px;font:normal 12.5px "Liberation Sans", sans-serif;color:#000;transform:scaleX(0.8310);'>No reliable position or size</span>
<span class="t" style='left:893.50px;top:270.40px;font:italic normal 12.5px "Liberation Sans", sans-serif;color:#000;transform:scaleX(0.8288);'>Flag for future review</span>
<span class="t" style='left:770.80px;top:304.80px;font:bold 12.3px "Liberation Sans", sans-serif;color:#800000;'>P</span>
<span class="t" style='left:770.80px;top:317.80px;font:bold 12.3px "Liberation Sans", sans-serif;color:#800000;'>L</span>
<span class="t" style='left:770.60px;top:330.80px;font:bold 12.3px "Liberation Sans", sans-serif;color:#800000;'>O</span>
<span class="t" style='left:771.60px;top:343.80px;font:bold 12.3px "Liberation Sans", sans-serif;color:#800000;'>T</span>
<span class="t" style='left:790.78px;top:300.80px;font:bold 12px "Liberation Sans", sans-serif;color:#800000;transform:scaleX(1.0167);'>Scale</span>
<span class="t" style='left:790.81px;top:326.50px;font:bold 12px "Liberation Sans", sans-serif;color:#800000;transform:scaleX(0.9870);'>Size</span>
<span class="t" style='left:849.15px;top:327.60px;font:bold 12px "Liberation Sans", sans-serif;color:#800000;transform:scaleX(0.9474);'>normal</span>
<span class="t" style='left:914.10px;top:327.60px;font:bold 12px "Liberation Sans", sans-serif;color:#800000;transform:scaleX(1.0312);'>x 2</span>
<span class="t" style='left:957.70px;top:327.60px;font:bold 12px "Liberation Sans", sans-serif;color:#800000;transform:scaleX(1.0294);'>x 5</span>
<span class="t" style='left:1005.85px;top:328.10px;font:bold 12px "Liberation Sans", sans-serif;color:#800080;transform:scaleX(0.9541);'>Form opacity</span>
<span class="t" style='left:791.70px;top:352.60px;font:bold 12px "Liberation Sans", sans-serif;color:#800000;'>Scroll range x1.25</span>
<span class="t" style='left:776.64px;top:382.00px;font:normal 12.5px "Liberation Sans", sans-serif;color:#000;transform:scaleX(0.8611);'>RMS fit 9.7 ±0.0 km</span>

</body></html>
